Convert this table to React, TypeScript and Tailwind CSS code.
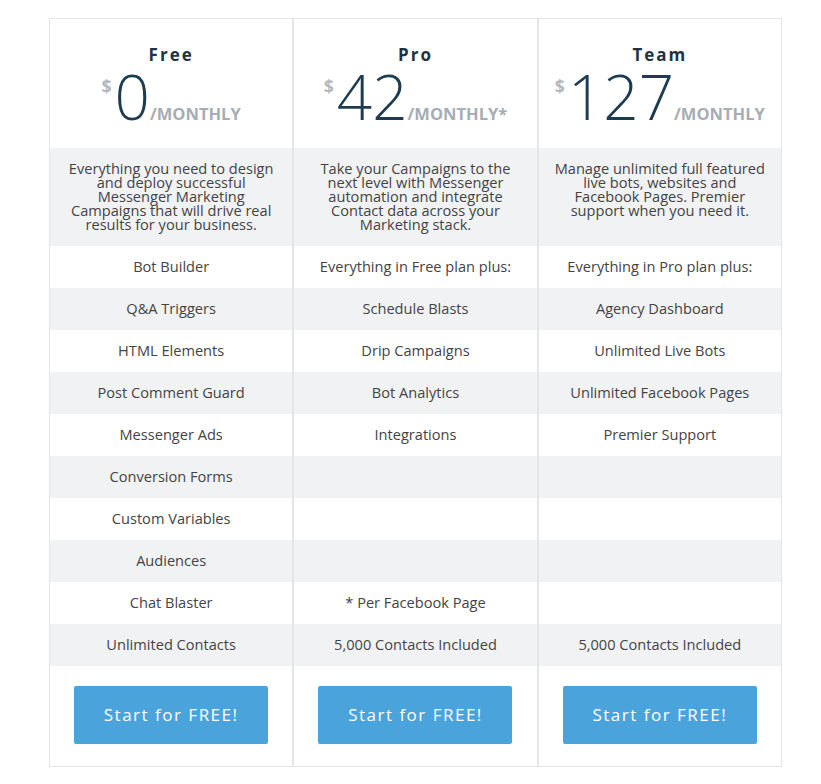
const plans = [
  {
    name: "Free",
    price: "0",
    per: "/MONTHLY",
    desc: [
      "Everything you need to design",
      "and deploy successful",
      "Messenger Marketing",
      "Campaigns that will drive real",
      "results for your business.",
    ],
    rows: [
      "Bot Builder",
      "Q&A Triggers",
      "HTML Elements",
      "Post Comment Guard",
      "Messenger Ads",
      "Conversion Forms",
      "Custom Variables",
      "Audiences",
      "Chat Blaster",
      "Unlimited Contacts",
    ],
  },
  {
    name: "Pro",
    price: "42",
    per: "/MONTHLY*",
    desc: [
      "Take your Campaigns to the",
      "next level with Messenger",
      "automation and integrate",
      "Contact data across your",
      "Marketing stack.",
    ],
    rows: [
      "Everything in Free plan plus:",
      "Schedule Blasts",
      "Drip Campaigns",
      "Bot Analytics",
      "Integrations",
      "",
      "",
      "",
      "* Per Facebook Page",
      "5,000 Contacts Included",
    ],
  },
  {
    name: "Team",
    price: "127",
    per: "/MONTHLY",
    desc: [
      "Manage unlimited full featured",
      "live bots, websites and",
      "Facebook Pages. Premier",
      "support when you need it.",
    ],
    rows: [
      "Everything in Pro plan plus:",
      "Agency Dashboard",
      "Unlimited Live Bots",
      "Unlimited Facebook Pages",
      "Premier Support",
      "",
      "",
      "",
      "",
      "5,000 Contacts Included",
    ],
  },
]

export default function App() {
  return (
    <div className="min-h-screen bg-white pt-[18px] pl-[49px] font-['Open_Sans',sans-serif]">
      <div className="flex w-[733px] border border-[#e3e5e7]">
        {plans.map((plan, i) => (
          <div
            key={plan.name}
            className={`flex flex-1 flex-col ${i < 2 ? "border-r-2 border-[#e3e5e7]" : ""}`}
          >
            {/* Header */}
            <div className="flex h-[129px] flex-col items-center pt-[26px]">
              <h3 className="text-[17px] leading-[20px] font-bold tracking-[2px] text-[#1f3340]">
                {plan.name}
              </h3>
              <div className="flex items-baseline leading-none">
                <span className="mt-[13px] mr-[3px] self-start text-[17.5px] font-bold text-[#b2b8bd]">$</span>
                <span className="text-[62px] font-light text-[#1d3c51]">{plan.price}</span>
                <span className="text-[16.5px] font-bold text-[#a6adb3]">{plan.per}</span>
              </div>
            </div>

            {/* Description */}
            <div className="h-[98px] bg-[#f1f2f3] pt-[13px] text-center text-[14.6px] leading-[14px] text-[#444]">
              {plan.desc.map((line) => (
                <div key={line}>{line}</div>
              ))}
            </div>

            {/* Feature rows */}
            {plan.rows.map((row, r) => (
              <div
                key={r}
                className={`flex h-[42px] items-center justify-center text-[14.6px] text-[#444] ${
                  r % 2 === 1 ? "bg-[#f1f2f3]" : "bg-white"
                }`}
              >
                {row}
              </div>
            ))}

            {/* CTA */}
            <div className="flex h-[100px] justify-center pt-[20px]">
              <button className="h-[58px] w-[194px] rounded-[2px] bg-[#4ba3dc] text-[17px] tracking-[1.5px] text-white">
                Start for FREE!
              </button>
            </div>
          </div>
        ))}
      </div>
    </div>
  )
}
